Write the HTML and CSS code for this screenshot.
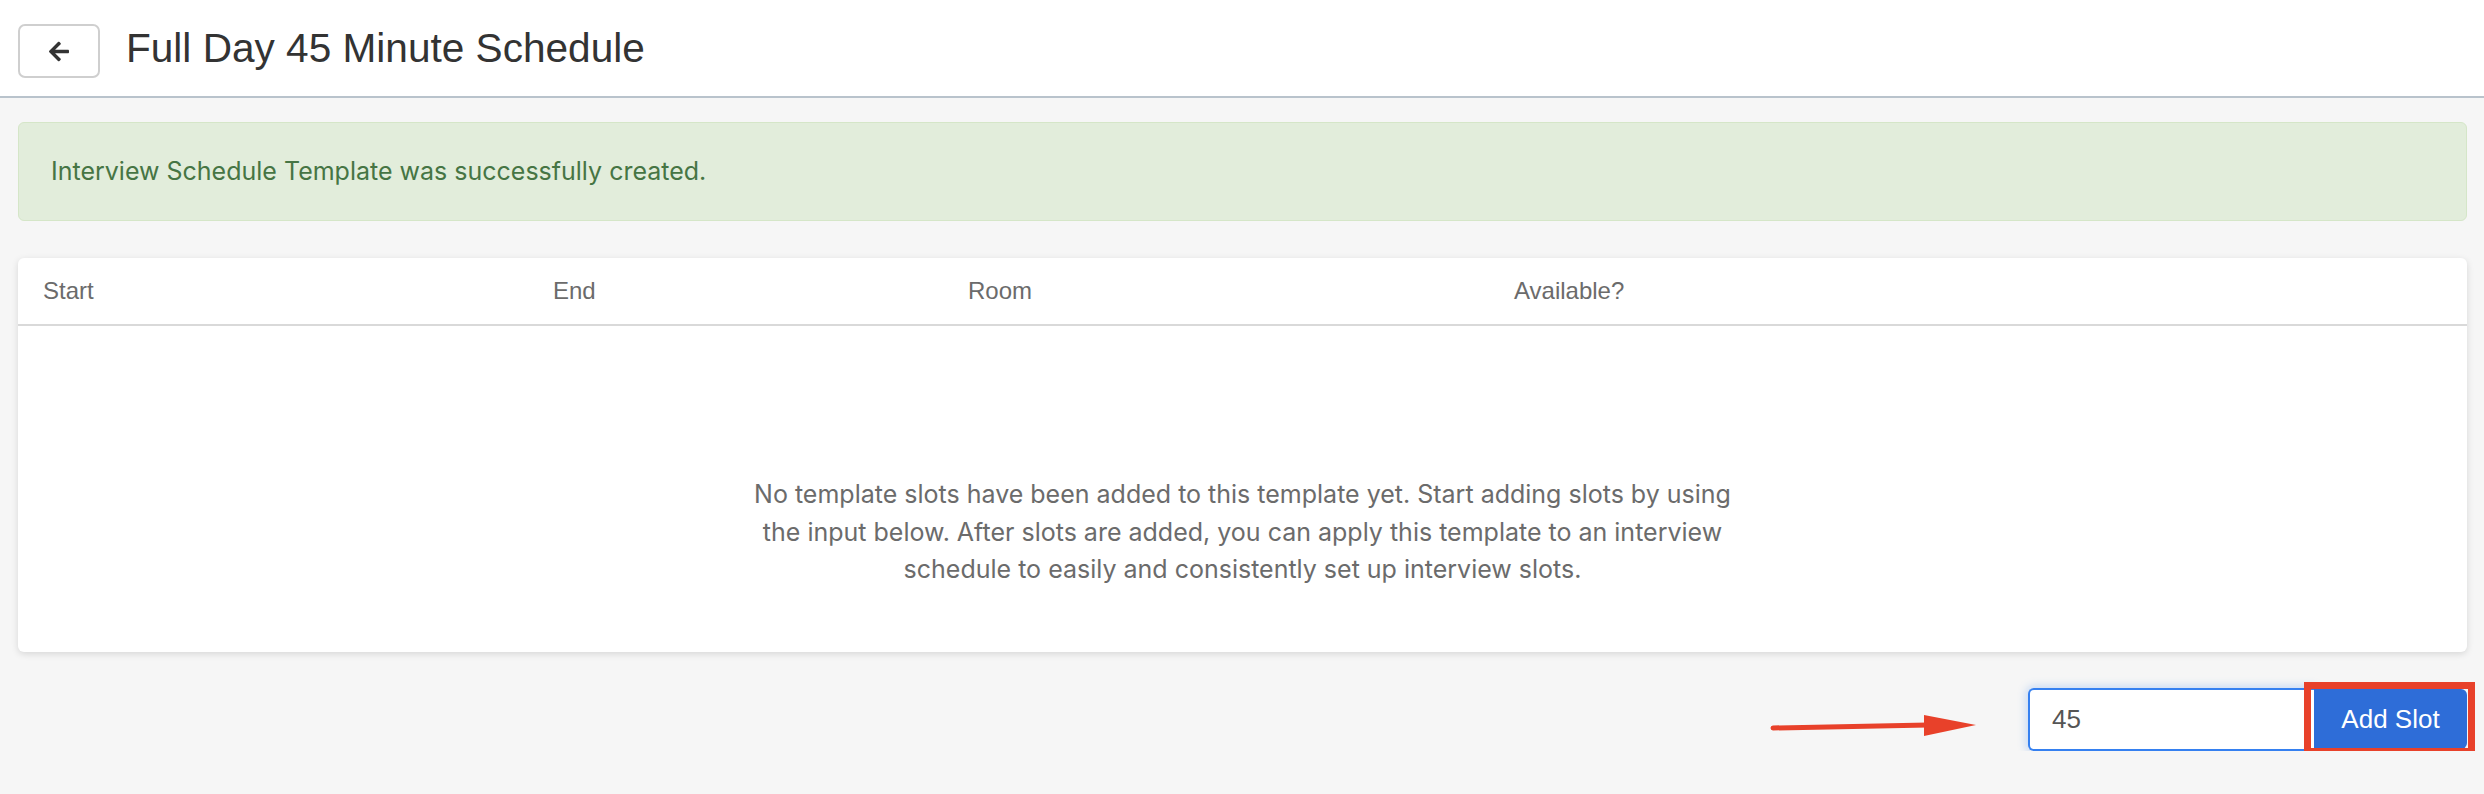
FILE: index.html
```html
<!DOCTYPE html>
<html lang="en">
<head>
  <meta charset="UTF-8" />
  <title>Full Day 45 Minute Schedule</title>
  <link rel="stylesheet" href="styles.css">
</head>
<body>
  <header class="page-header">
    <button class="back-btn" type="button" aria-label="Back">
      <svg viewBox="0 0 448 512" width="20" height="23"><path fill="#333" d="M257.5 445.1l-22.2 22.2c-9.4 9.4-24.6 9.4-33.9 0L7 273c-9.4-9.4-9.4-24.6 0-33.9L201.4 44.7c9.4-9.4 24.6-9.4 33.9 0l22.2 22.2c9.5 9.5 9.3 25-.4 34.3L136.6 216H424c13.3 0 24 10.7 24 24v32c0 13.3-10.7 24-24 24H136.6l120.5 114.8c9.8 9.3 10 24.8.4 34.3z"/></svg>
    </button>
    <h1>Full Day 45 Minute Schedule</h1>
  </header>

  <main class="content">
    <div class="alert">Interview Schedule Template was successfully created.</div>

    <div class="card">
      <div class="table-head">
        <span>Start</span>
        <span>End</span>
        <span>Room</span>
        <span>Available?</span>
      </div>
      <div class="table-empty">
        <p>No template slots have been added to this template yet. Start adding slots by using the input below. After slots are added, you can apply this template to an interview schedule to easily and consistently set up interview slots.</p>
      </div>
    </div>

    <div class="add-row">
      <div class="input-group">
        <svg class="annot-arrow" viewBox="0 0 210 24" width="210" height="24">
          <line x1="3" y1="16" x2="158" y2="13" stroke="#e8412a" stroke-width="5" stroke-linecap="round"/>
          <polygon points="154,3 206,13 154,24" fill="#e8412a"/>
        </svg>
        <input type="text" value="45" />
        <div class="btn-wrap">
          <button class="add-btn" type="button">Add Slot</button>
          <span class="annot-box"></span>
        </div>
      </div>
    </div>
  </main>
</body>
</html>
```

FILE: styles.css
```css
body {
  margin: 0;
  font-family: "Liberation Sans", Arial, sans-serif;
  background-color: #f6f6f6;
  color: #333;
}
.page-header {
  display: flex;
  align-items: flex-start;
  gap: 26px;
  height: 98px;
  padding: 24px 18px 0;
  box-sizing: border-box;
  background-color: #fff;
  border-bottom: 2px solid #b9c3cc;
}
.back-btn {
  display: flex;
  align-items: center;
  justify-content: center;
  width: 82px;
  height: 54px;
  padding: 0;
  background: #fff;
  border: 2px solid #cfcfcf;
  border-radius: 7px;
}
h1 {
  margin: 0;
  font-size: 40.6px;
  font-weight: normal;
  line-height: 48px;
  color: #333;
}
.content {
  padding: 24px 17px 0 18px;
}
.alert {
  padding: 30px 32px 31px;
  font-family: Inter, "Liberation Sans", sans-serif;
  font-size: 25px;
  line-height: 36px;
  color: #467544;
  background-color: #e2eddb;
  border: 1px solid #d5e6c8;
  border-radius: 6px;
}
.card {
  margin-top: 37px;
  background: #fff;
  border-radius: 6px;
  box-shadow: 0 2px 7px rgba(0, 0, 0, 0.13);
}
.table-head {
  display: grid;
  grid-template-columns: 510px 415px 546px 1fr;
  padding: 15px 25px;
  font-size: 24px;
  line-height: 36px;
  color: #6b6b6b;
  border-bottom: 2px solid #d9d9d9;
}
.table-empty {
  padding: 150px 0 63px;
}
.table-empty p {
  max-width: 1000px;
  margin: 0 auto;
  text-align: center;
  font-family: Inter, "Liberation Sans", sans-serif;
  font-size: 25px;
  line-height: 37.5px;
  color: #6b6b6b;
}
.add-row {
  display: flex;
  justify-content: flex-end;
  margin-top: 36px;
}
.input-group {
  position: relative;
  display: flex;
  align-items: center;
}
.input-group input {
  width: 286px;
  height: 63px;
  box-sizing: border-box;
  padding: 0 22px;
  font-family: inherit;
  font-size: 26px;
  color: #555;
  border: 2px solid #3580f0;
  border-right: none;
  border-radius: 6px 0 0 6px;
  box-shadow: 0 0 8px 2px rgba(53, 128, 240, 0.25);
  outline: none;
}
.btn-wrap {
  position: relative;
}
.add-btn {
  display: block;
  width: 153px;
  height: 60px;
  padding: 0;
  font-family: inherit;
  font-size: 26px;
  color: #fff;
  background-color: #2e6dd8;
  border: none;
  border-radius: 0 6px 6px 0;
}
.annot-box {
  position: absolute;
  top: -7px;
  right: -8px;
  bottom: -6px;
  left: -10px;
  border: 7px solid #e8412a;
  pointer-events: none;
}
.annot-arrow {
  position: absolute;
  left: -258px;
  top: 24px;
}
```
